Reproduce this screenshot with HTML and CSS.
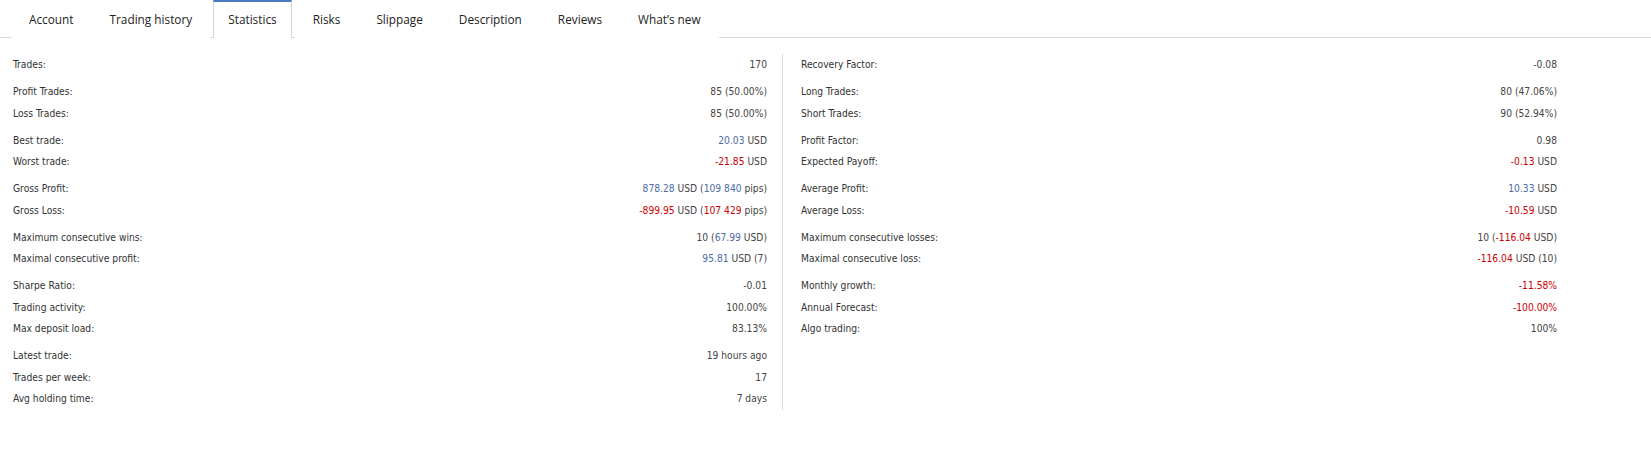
FILE: index.html
```html
<!DOCTYPE html>
<html>
<head>
<meta charset="utf-8">
<link rel="stylesheet" href="styles.css">
</head>
<body>
<div class="tabs">
  <div class="tab">Account</div>
  <div class="tab">Trading history</div>
  <div class="tab active">Statistics</div>
  <div class="tab">Risks</div>
  <div class="tab">Slippage</div>
  <div class="tab">Description</div>
  <div class="tab">Reviews</div>
  <div class="tab">What’s new</div>
</div>
<div class="stats">
  <div class="col left">
    <div class="group">
      <div class="row"><span class="lbl">Trades:</span><span class="val">170</span></div>
    </div>
    <div class="group">
      <div class="row"><span class="lbl">Profit Trades:</span><span class="val">85 (50.00%)</span></div>
      <div class="row"><span class="lbl">Loss Trades:</span><span class="val">85 (50.00%)</span></div>
    </div>
    <div class="group">
      <div class="row"><span class="lbl">Best trade:</span><span class="val"><span class="pos">20.03</span> USD</span></div>
      <div class="row"><span class="lbl">Worst trade:</span><span class="val"><span class="neg">-21.85</span> USD</span></div>
    </div>
    <div class="group">
      <div class="row"><span class="lbl">Gross Profit:</span><span class="val"><span class="pos">878.28</span> USD (<span class="pos">109 840</span> pips)</span></div>
      <div class="row"><span class="lbl">Gross Loss:</span><span class="val"><span class="neg">-899.95</span> USD (<span class="neg">107 429</span> pips)</span></div>
    </div>
    <div class="group">
      <div class="row"><span class="lbl">Maximum consecutive wins:</span><span class="val">10 (<span class="pos">67.99</span> USD)</span></div>
      <div class="row"><span class="lbl">Maximal consecutive profit:</span><span class="val"><span class="pos">95.81</span> USD (7)</span></div>
    </div>
    <div class="group">
      <div class="row"><span class="lbl">Sharpe Ratio:</span><span class="val">-0.01</span></div>
      <div class="row"><span class="lbl">Trading activity:</span><span class="val">100.00%</span></div>
      <div class="row"><span class="lbl">Max deposit load:</span><span class="val">83.13%</span></div>
    </div>
    <div class="group">
      <div class="row"><span class="lbl">Latest trade:</span><span class="val">19 hours ago</span></div>
      <div class="row"><span class="lbl">Trades per week:</span><span class="val">17</span></div>
      <div class="row"><span class="lbl">Avg holding time:</span><span class="val">7 days</span></div>
    </div>
  </div>
  <div class="col right">
    <div class="group">
      <div class="row"><span class="lbl">Recovery Factor:</span><span class="val">-0.08</span></div>
    </div>
    <div class="group">
      <div class="row"><span class="lbl">Long Trades:</span><span class="val">80 (47.06%)</span></div>
      <div class="row"><span class="lbl">Short Trades:</span><span class="val">90 (52.94%)</span></div>
    </div>
    <div class="group">
      <div class="row"><span class="lbl">Profit Factor:</span><span class="val">0.98</span></div>
      <div class="row"><span class="lbl">Expected Payoff:</span><span class="val"><span class="neg">-0.13</span> USD</span></div>
    </div>
    <div class="group">
      <div class="row"><span class="lbl">Average Profit:</span><span class="val"><span class="pos">10.33</span> USD</span></div>
      <div class="row"><span class="lbl">Average Loss:</span><span class="val"><span class="neg">-10.59</span> USD</span></div>
    </div>
    <div class="group">
      <div class="row"><span class="lbl">Maximum consecutive losses:</span><span class="val">10 (<span class="neg">-116.04</span> USD)</span></div>
      <div class="row"><span class="lbl">Maximal consecutive loss:</span><span class="val"><span class="neg">-116.04</span> USD (10)</span></div>
    </div>
    <div class="group">
      <div class="row"><span class="lbl">Monthly growth:</span><span class="val"><span class="neg">-11.58%</span></span></div>
      <div class="row"><span class="lbl">Annual Forecast:</span><span class="val"><span class="neg">-100.00%</span></span></div>
      <div class="row"><span class="lbl">Algo trading:</span><span class="val">100%</span></div>
    </div>
  </div>
</div>
</body>
</html>
```

FILE: styles.css
```css
html, body {
  margin: 0;
  padding: 0;
  background: #fff;
}

.tabs {
  display: flex;
  height: 37px;
  border-bottom: 1px solid #d9d9d9;
  padding-left: 11px;
  font-family: "Open Sans", "Noto Sans", sans-serif;
  font-size: 11.8px;
  color: #222;
}

.tab {
  display: flex;
  align-items: center;
  padding: 0 17px 2px;
  border: 1px solid transparent;
  border-bottom: none;
  border-top-width: 2px;
  margin-bottom: -1px;
  background: #fff;
  white-space: nowrap;
}

.tab.active {
  border-color: #d4d4d4;
  border-top-color: #4a78c2;
  padding: 0 14px 2px;
  margin-left: 3px;
  margin-right: 3px;
}

.stats {
  display: grid;
  grid-template-columns: 783px 787px;
  width: 1570px;
  padding-top: 16px;
  font-family: "DejaVu Sans Condensed", "DejaVu Sans", sans-serif;
  font-size: 10.2px;
  color: #333;
}

.col {
  display: flex;
  flex-direction: column;
  gap: 5.5px;
}

.col.left {
  padding: 0 15px 0 13px;
  border-right: 1px solid #dcdcdc;
}

.col.right {
  padding: 0 13px 0 18px;
}

.group {
  display: flex;
  flex-direction: column;
}

.row {
  display: flex;
  justify-content: space-between;
  height: 21.5px;
  line-height: 21.5px;
}

.lbl {
  color: #333;
}

.val {
  color: #444;
}

.pos {
  color: #4c6ca8;
}

.neg {
  color: #cc0000;
}
```
